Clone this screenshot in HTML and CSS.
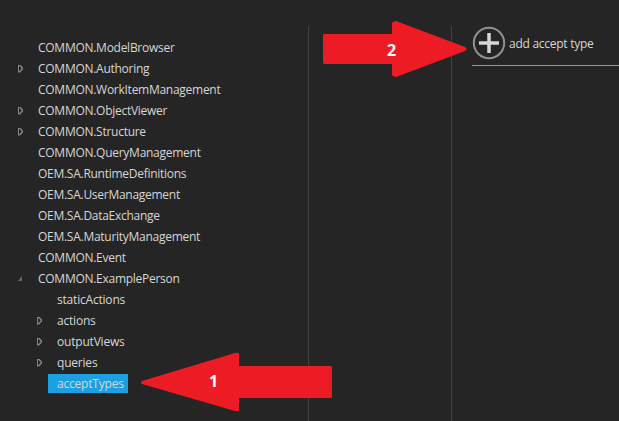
FILE: index.html
```html
<!DOCTYPE html>
<html lang="en">
<head>
  <meta charset="UTF-8"/>
  <meta name="viewport" content="width=device-width, initial-scale=1.0"/>
  <title>Model Browser</title>
  <link rel="stylesheet" href="styles.css">
</head>
<body>
  <div class="browser">
    <!-- ========== TREE ========== -->
    <div class="column tree-column">
      <ul class="tree">
        <li><span class="label">COMMON.ModelBrowser</span></li>
        <li class="closed"><span class="label">COMMON.Authoring</span></li>
        <li><span class="label">COMMON.WorkItemManagement</span></li>
        <li class="closed"><span class="label">COMMON.ObjectViewer</span></li>
        <li class="closed"><span class="label">COMMON.Structure</span></li>
        <li><span class="label">COMMON.QueryManagement</span></li>
        <li><span class="label">OEM.SA.RuntimeDefinitions</span></li>
        <li><span class="label">OEM.SA.UserManagement</span></li>
        <li><span class="label">OEM.SA.DataExchange</span></li>
        <li><span class="label">OEM.SA.MaturityManagement</span></li>
        <li><span class="label">COMMON.Event</span></li>
        <li class="open"><span class="label">COMMON.ExamplePerson</span></li>
        <li class="child"><span class="label">staticActions</span></li>
        <li class="child closed"><span class="label">actions</span></li>
        <li class="child closed"><span class="label">outputViews</span></li>
        <li class="child closed"><span class="label">queries</span></li>
        <li class="child selected"><span class="label">acceptTypes</span></li>
      </ul>
    </div>

    <div class="column"></div>

    <!-- ========== DETAILS ========== -->
    <div class="details">
      <div class="add-row">
        <svg class="add-icon" viewBox="0 0 34 34">
          <circle cx="17" cy="17" r="15.2"/>
          <path d="M17 7v20M7 17h20"/>
        </svg>
        <span class="add-text">add accept type</span>
      </div>
    </div>
  </div>

  <!-- step markers -->
  <div class="marker marker-one">
    <svg viewBox="0 0 191 60"><path d="M1 29L94 1Q98 0 98 2V14H190L191 15V45L190 46H98V58Q98 60 94 59L1 32Q-1 30.500 1 29Z"/></svg>
    <span class="number">1</span>
  </div>
  <div class="marker marker-two">
    <svg viewBox="0 0 144 56"><path d="M1 13H69V2Q70 0 73 0L142 26Q145 28 142 30L73 56Q70 56 69 54V43H1L0 42V14Z"/></svg>
    <span class="number">2</span>
  </div>
</body>
</html>
```

FILE: styles.css
```css
*{margin:0;padding:0;box-sizing:border-box}
body{height:421px;overflow:hidden;background:#252525;color:#d6d6d6;font:12px/19px 'Open Sans','Noto Sans',sans-serif;letter-spacing:-.27px}

.browser{display:grid;grid-template-columns:309px 143px 1fr;height:421px;padding-top:26px}
.column{border-right:1px solid #434343}

/* tree */
.tree-column{padding-top:11px}
.tree{list-style:none}
.tree li{display:flex;align-items:center;height:21px;padding-left:18px}
.tree li::before{content:'';width:5px;height:8px;margin-right:6px}
.tree li.child{padding-left:37px}
.tree li.closed::before{background:#858585;clip-path:polygon(evenodd,0 0,2px 0,5px 3px,5px 5px,2px 8px,0 8px,0 0,1px 1.500px,1px 6.500px,1.500px 6.500px,3.800px 4px,1.500px 1.500px,1px 1.500px)}
.tree li.open::before{height:5px;width:4px;margin-right:7px;background:#666;clip-path:polygon(100% 0,100% 100%,0 100%)}
.label{height:19px;padding:0 4px 0 9px;white-space:nowrap}
.child .label{letter-spacing:-.2px}
.selected .label{background:#1ba1e2}

/* details */
.details{padding-left:20px}
.add-row{display:flex;align-items:center;height:40px;padding-bottom:5px;border-bottom:1px solid #999}
.add-icon{width:34px;height:34px;margin-right:3px;fill:none}
.add-icon circle{stroke:#929292;stroke-width:2}
.add-icon path{stroke:#d6d6d6;stroke-width:3.500}
.add-text{white-space:nowrap}

/* step markers lie over the columns */
.marker{position:absolute;color:#fff;font-size:16px;font-weight:700;line-height:20px}
.marker svg{display:block;width:100%;height:100%;fill:#ed1c24}
.marker .number{position:absolute}
.marker-one{left:141px;top:352px;width:191px;height:60px}
.marker-one .number{left:68px;top:19px}
.marker-two{left:323px;top:21px;width:144px;height:56px}
.marker-two .number{left:64px;top:19px}
```
